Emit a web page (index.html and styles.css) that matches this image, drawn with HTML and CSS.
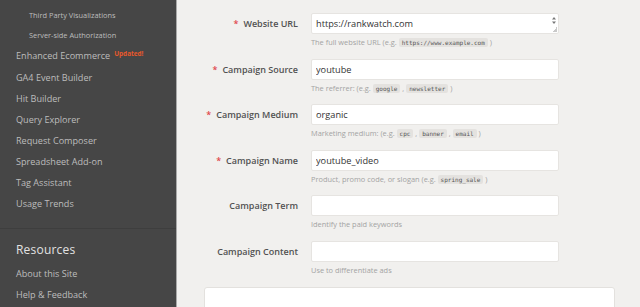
FILE: index.html
```html
<!DOCTYPE html>
<html>
  <head>
    <link rel="stylesheet" href="styles.css">
  </head>
  <body>
    <div class="page">
      <aside class="sidebar">
        <ul class="nav">
          <li class="sub">Interactive Charts</li>
          <li class="sub">Third Party Visualizations</li>
          <li class="sub">Server-side Authorization</li>
          <li>Enhanced Ecommerce<span class="badge">Updated!</span></li>
          <li>GA4 Event Builder</li>
          <li>Hit Builder</li>
          <li>Query Explorer</li>
          <li>Request Composer</li>
          <li>Spreadsheet Add-on</li>
          <li>Tag Assistant</li>
          <li>Usage Trends</li>
        </ul>
        <div class="section">
          <h2>Resources</h2>
          <ul class="nav">
            <li>About this Site</li>
            <li>Help &amp; Feedback</li>
          </ul>
        </div>
      </aside>
      <main class="main">
        <form class="builder">
          <div class="field">
            <label class="label"><span class="req">*</span>Website URL</label>
            <div class="control">
              <div class="textwrap">
                <textarea class="input area" rows="1">https://rankwatch.com</textarea>
                <span class="spin">
                  <svg width="4" height="9" viewBox="0 0 4 9"><path d="M0 3.5L2 1L4 3.5Z M0 5.5L2 8L4 5.5Z" fill="#777"/></svg>
                </span>
                <span class="grip"></span>
              </div>
              <p class="help">The full website URL (e.g. <code>https://www.example.com</code> )</p>
            </div>
          </div>
          <div class="field">
            <label class="label"><span class="req">*</span>Campaign Source</label>
            <div class="control">
              <input class="input" type="text" value="youtube">
              <p class="help">The referrer: (e.g. <code>google</code> , <code>newsletter</code> )</p>
            </div>
          </div>
          <div class="field">
            <label class="label"><span class="req">*</span>Campaign Medium</label>
            <div class="control">
              <input class="input" type="text" value="organic">
              <p class="help">Marketing medium: (e.g. <code>cpc</code> , <code>banner</code> , <code>email</code> )</p>
            </div>
          </div>
          <div class="field">
            <label class="label"><span class="req">*</span>Campaign Name</label>
            <div class="control">
              <input class="input" type="text" value="youtube_video">
              <p class="help">Product, promo code, or slogan (e.g. <code>spring_sale</code> )</p>
            </div>
          </div>
          <div class="field">
            <label class="label">Campaign Term</label>
            <div class="control">
              <input class="input" type="text" value="">
              <p class="help">Identify the paid keywords</p>
            </div>
          </div>
          <div class="field">
            <label class="label">Campaign Content</label>
            <div class="control">
              <input class="input" type="text" value="">
              <p class="help">Use to differentiate ads</p>
            </div>
          </div>
        </form>
        <div class="panel"></div>
      </main>
    </div>
  </body>
</html>
```

FILE: styles.css
```css
html, body {
  margin: 0;
  height: 100%;
  overflow: hidden;
}

body {
  font-family: "Open Sans", "Liberation Sans", sans-serif;
  background: #f1f0ee;
}

.page {
  display: flex;
  height: 307px;
}

.sidebar {
  width: 176px;
  flex: none;
  background: #464646;
  border-right: 1px solid #a9a9a9;
  overflow: hidden;
}

.nav {
  list-style: none;
  margin: 0;
  padding: 0;
}

.sidebar > .nav {
  margin-top: -15px;
}

.nav li {
  padding-left: 16px;
  font-size: 9.1px;
  line-height: 21px;
  color: #bdbdbd;
  white-space: nowrap;
}

.nav li.sub {
  padding-left: 29px;
  font-size: 7.4px;
  line-height: 20px;
}

.badge {
  position: relative;
  top: -3px;
  margin-left: 4px;
  font-size: 6.4px;
  font-weight: 700;
  color: #e8582b;
}

.section {
  margin-top: 14px;
  border-top: 1px solid #3e3e3e;
  padding-top: 13px;
}

.section h2 {
  margin: 0 0 5px 16px;
  font-size: 12px;
  line-height: 16px;
  font-weight: 400;
  letter-spacing: 0.2px;
  color: #e2e2e2;
}

.main {
  flex: 1;
}

.builder {
  padding-top: 13px;
}

.field {
  display: flex;
  gap: 13px;
  margin-bottom: 10.6px;
}

.label {
  width: 121px;
  flex: none;
  text-align: right;
  font-size: 9px;
  font-weight: 600;
  line-height: 21px;
  color: #525252;
  white-space: nowrap;
}

.req {
  color: #e0464a;
  margin-right: 5px;
}

.control {
  width: 248px;
}

.textwrap {
  position: relative;
}

.input {
  display: block;
  box-sizing: border-box;
  width: 248px;
  height: 21px;
  margin: 0;
  padding: 0 4px;
  border: 1px solid #e6e4e1;
  border-radius: 2px;
  background: #fff;
  font-family: "Open Sans", "Liberation Sans", sans-serif;
  font-size: 9.2px;
  color: #333;
  outline: none;
}

.area {
  resize: none;
  overflow: hidden;
  padding-top: 3px;
  line-height: 13px;
}

.spin {
  position: absolute;
  right: 3px;
  top: 3px;
  display: flex;
}

.grip {
  position: absolute;
  right: 2px;
  bottom: 2px;
  width: 5px;
  height: 5px;
  background: linear-gradient(135deg, transparent 50%, #c9c9c9 50%);
}

.help {
  margin: 2px 0 0;
  height: 12px;
  font-size: 7.4px;
  line-height: 12px;
  color: #a3a3a3;
  white-space: nowrap;
}

.help code {
  font-family: "DejaVu Sans Mono", "Liberation Mono", monospace;
  font-size: 6px;
  line-height: 1;
  color: #555;
  background: #e4e2df;
  border-radius: 2px;
  padding: 1px 3px;
}

.panel {
  margin: 9px 0 0 27px;
  width: 409px;
  height: 40px;
  background: #fff;
  border: 1px solid #e3e1de;
  border-radius: 3px;
}
```
